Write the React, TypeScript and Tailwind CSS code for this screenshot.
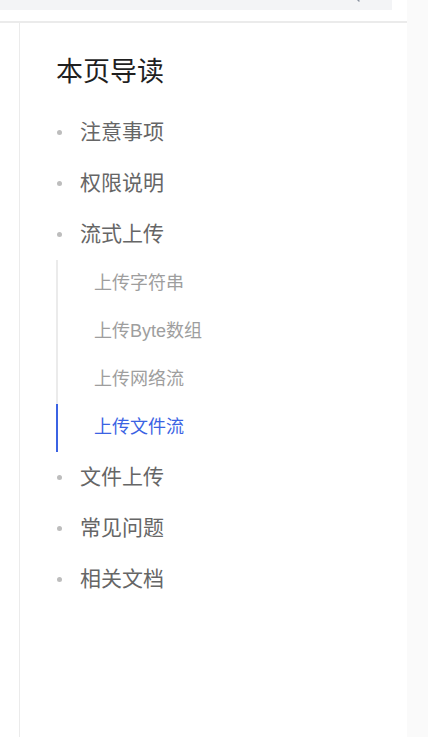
import React from 'react';

type NavItem = {
  label: string;
  children?: { label: string; active?: boolean }[];
};

const items: NavItem[] = [
  { label: '注意事项' },
  { label: '权限说明' },
  {
    label: '流式上传',
    children: [
      { label: '上传字符串' },
      { label: '上传Byte数组' },
      { label: '上传网络流' },
      { label: '上传文件流', active: true },
    ],
  },
  { label: '文件上传' },
  { label: '常见问题' },
  { label: '相关文档' },
];

const App: React.FC = () => {
  return (
    <div
      className="flex w-[428px] h-[737px] overflow-hidden bg-white"
      style={{ fontFamily: '"Liberation Sans", "Noto Sans CJK SC", sans-serif' }}
    >
      {/* main column */}
      <div className="flex flex-col w-[407px] h-full">
        {/* search bar remnant */}
        <div className="relative h-[10px] w-[392px] bg-[#f3f4f6] overflow-hidden">
          <svg
            className="absolute left-[346px] top-[-12px]"
            width="14"
            height="14"
            viewBox="0 0 14 14"
            fill="none"
            stroke="#8a93a0"
            strokeWidth="1.4"
            strokeLinecap="round"
          >
            <circle cx="6" cy="6" r="4.5" />
            <path d="M9.5 9.5L13 13" />
          </svg>
        </div>
        <div className="h-[11px]" />
        <div className="h-[2px] bg-[#ebebeb]" />

        <div className="flex flex-1">
          <div className="w-[20px] border-r border-[#ebebeb]" />

          {/* page outline */}
          <div className="pl-[36px] pt-[31px]">
            <h2 className="text-[27px] leading-[36px] text-[#1f1f1f] font-normal">本页导读</h2>
            <ul className="mt-[16.5px]">
              {items.map((item) => (
                <li key={item.label}>
                  <div className="flex items-center h-[51px]">
                    <span className="ml-[1px] w-[5px] h-[5px] rounded-full bg-[#bdbdbd]" />
                    <span className="ml-[18px] text-[21px] text-[#666666]">{item.label}</span>
                  </div>
                  {item.children && (
                    <ul className="border-l-2 border-[#ebebeb]">
                      {item.children.map((child) => (
                        <li
                          key={child.label}
                          className={`flex items-center h-[48px] pl-[36px] -ml-[2px] border-l-2 text-[18px] ${
                            child.active
                              ? 'border-[#3b63e3] text-[#3b63e3]'
                              : 'border-transparent text-[#9e9e9e]'
                          }`}
                        >
                          {child.label}
                        </li>
                      ))}
                    </ul>
                  )}
                </li>
              ))}
            </ul>
          </div>
        </div>
      </div>

      {/* right gutter */}
      <div className="flex-1 bg-[#fafafa]" />
    </div>
  );
};

export default App;
